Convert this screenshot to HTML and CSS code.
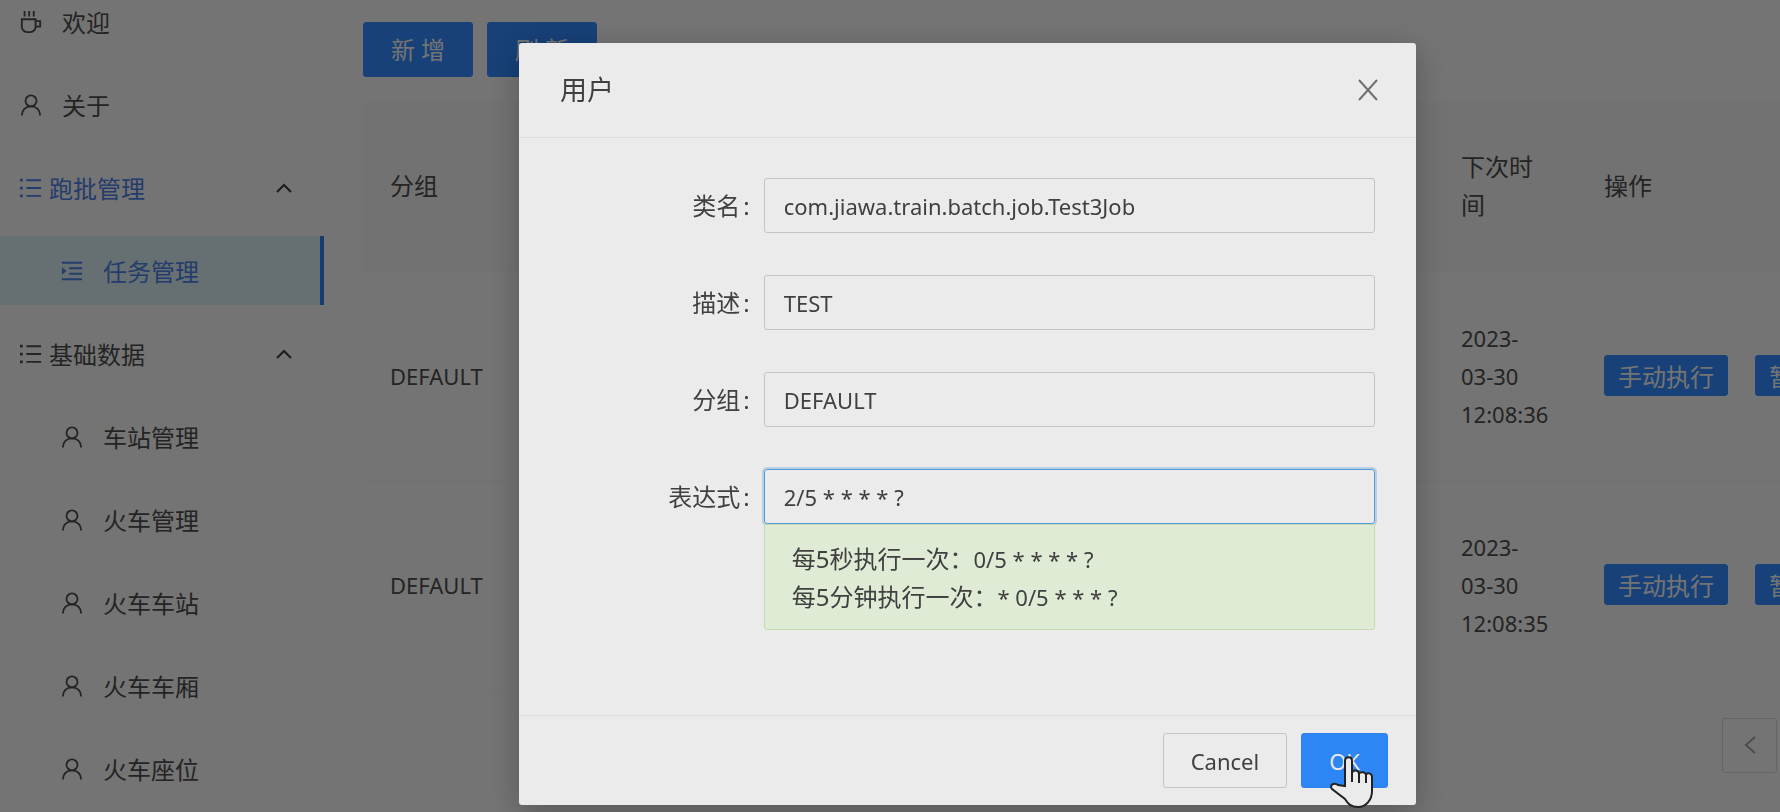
FILE: index.html
```html
<!DOCTYPE html>
<html lang="zh-CN">
<head>
<meta charset="utf-8">
<title>任务管理</title>
<link rel="stylesheet" href="styles.css">
</head>
<body>
<svg class="defs" aria-hidden="true">
  <symbol id="user" viewBox="0 0 24 24"><circle cx="12" cy="7.500" r="6"/><path d="M2 23.500c0-6 4-10 10-10s10 4 10 10"/></symbol>
  <symbol id="list" viewBox="0 0 24 24"><path d="M7 3.500h16M7 12h16M7 20.500h16"/><path class="dot" d="M0 2h3v3H0zM0 10.500h3v3H0zM0 19h3v3H0z"/></symbol>
  <symbol id="indent" viewBox="0 0 24 24"><path d="M1 3h22M9 9h14M9 15h14M1 21h22"/><path class="dot" d="M1 8l5 4-5 4z"/></symbol>
  <symbol id="cup" viewBox="0 0 24 24"><path d="M5 0v6M10 0v6M15 0v6M2 9h15v7a6 6 0 0 1-6 7H8a6 6 0 0 1-6-7zM17 11h5v6h-5"/></symbol>
  <symbol id="up" viewBox="0 0 18 12"><path d="M2 10l7-7 7 7"/></symbol>
</svg>

<div class="page">
  <nav class="sidebar">
    <ul class="menu">
      <li><a class="item" href="#"><svg class="icon"><use href="#cup"/></svg><span>欢迎</span></a></li>
      <li><a class="item" href="#"><svg class="icon"><use href="#user"/></svg><span>关于</span></a></li>
      <li><button class="item group active" type="button"><svg class="icon"><use href="#list"/></svg><span>跑批管理</span><svg class="arrow"><use href="#up"/></svg></button></li>
      <li><a class="item sub selected" href="#"><svg class="icon"><use href="#indent"/></svg><span>任务管理</span></a></li>
      <li><button class="item group" type="button"><svg class="icon"><use href="#list"/></svg><span>基础数据</span><svg class="arrow"><use href="#up"/></svg></button></li>
      <li><a class="item sub" href="#"><svg class="icon"><use href="#user"/></svg><span>车站管理</span></a></li>
      <li><a class="item sub" href="#"><svg class="icon"><use href="#user"/></svg><span>火车管理</span></a></li>
      <li><a class="item sub" href="#"><svg class="icon"><use href="#user"/></svg><span>火车车站</span></a></li>
      <li><a class="item sub" href="#"><svg class="icon"><use href="#user"/></svg><span>火车车厢</span></a></li>
      <li><a class="item sub" href="#"><svg class="icon"><use href="#user"/></svg><span>火车座位</span></a></li>
    </ul>
  </nav>
  <main class="content">
    <div class="toolbar">
      <button class="btn primary wide" type="button">新 增</button>
      <button class="btn primary wide" type="button">刷 新</button>
    </div>
    <table class="table">
      <colgroup><col class="col-group"><col><col class="col-time"><col class="col-actions"></colgroup>
      <thead>
        <tr><th>分组</th><th></th><th>下次时间</th><th>操作</th></tr>
      </thead>
      <tbody>
        <tr><td>DEFAULT</td><td></td><td>2023-<br>03-30<br>12:08:36</td><td><div class="actions"><button class="btn primary small" type="button">手动执行</button><button class="btn primary small" type="button">暂停</button></div></td></tr>
        <tr><td>DEFAULT</td><td></td><td>2023-<br>03-30<br>12:08:35</td><td><div class="actions"><button class="btn primary small" type="button">手动执行</button><button class="btn primary small" type="button">暂停</button></div></td></tr>
      </tbody>
    </table>
    <div class="pagination">
      <button class="prev" type="button" aria-label="上一页"><svg viewBox="0 0 12 18"><path d="M11 1L2 9l9 8"/></svg></button>
    </div>
  </main>
</div>

<div class="mask">
  <section class="modal" role="dialog" aria-labelledby="modal-title">
    <header class="modal-header">
      <h2 id="modal-title">用户</h2>
      <button class="close" type="button" aria-label="关闭"><svg viewBox="0 0 20 22"><path d="M1 1l18 20M19 1L1 21"/></svg></button>
    </header>
    <form class="modal-body">
      <div class="field"><label for="name">类名<i>:</i></label><input id="name" type="text" value="com.jiawa.train.batch.job.Test3Job"></div>
      <div class="field"><label for="desc">描述<i>:</i></label><input id="desc" type="text" value="TEST"></div>
      <div class="field"><label for="group">分组<i>:</i></label><input id="group" type="text" value="DEFAULT"></div>
      <div class="field"><label for="cron">表达式<i>:</i></label>
        <div class="control">
          <input class="focused" id="cron" type="text" value="2/5 * * * * ?">
          <div class="hint"><span>每5秒执行一次：</span>0/5 * * * * ?<br><span>每5分钟执行一次：</span>* 0/5 * * * ?</div>
        </div>
      </div>
    </form>
    <footer class="modal-footer">
      <button class="btn" type="button">Cancel</button>
      <button class="btn primary ok" type="button">OK
        <svg class="pointer" viewBox="0 0 43 53" aria-hidden="true"><path d="M15 30V5c0-5 7-5 7 0v12c1-4 7-3 7 1 1-3 7-2 7 1 1-3 6-2 6 2v14c0 9-6 16-14 16-7 0-10-3-13-8L2 33c-3-4 2-7 6-4z"/><path d="M22 17v9M29 18v9M36 19v8"/></svg>
      </button>
    </footer>
  </section>
</div>
</body>
</html>
```
FILE: styles.css
```css
* { box-sizing: border-box; }

body {
  margin: 0;
  height: 100vh;
  overflow: hidden;
  background: #e8e8e8;
  color: #484848;
  font: 22px/38px "Noto Sans", "Noto Sans CJK SC", sans-serif;
}

button, input { font: inherit; color: inherit; }
button { cursor: pointer; }
svg { fill: none; stroke: currentColor; stroke-width: 2; }
.dot { fill: currentColor; stroke: none; }
.defs { display: none; }

.page { display: flex; height: 100vh; overflow: hidden; }

/* Sidebar */
.sidebar { flex: 0 0 324px; }
.menu {
  display: grid;
  gap: 14px;
  margin: -13px 0 0;
  padding: 0;
  list-style: none;
  font-family: "Noto Sans CJK SC", sans-serif;
  font-size: 24px;
}
.item {
  display: flex;
  align-items: center;
  gap: 20px;
  width: 100%;
  height: 69px;
  padding: 0 31px 0 20px;
  border: 0;
  background: none;
  color: inherit;
  text-align: left;
  text-decoration: none;
}
.group { gap: 7px; }
.sub { padding-left: 61px; }
.icon { width: 22px; height: 22px; }
.arrow { width: 18px; height: 12px; margin-left: auto; color: #383838; }
.active, .selected { color: #4878d8; }
.active .arrow { color: #383838; }
.selected { background: #cce0e6; border-right: 4px solid #2e78e0; }

/* Task table */
.content { flex: 1; min-width: 0; padding: 22px 0 0 39px; overflow: hidden; }
.toolbar { display: flex; gap: 14px; margin-bottom: 25px; }
.btn {
  height: 55px;
  padding: 0 27px;
  border: 1px solid #c4c4c4;
  border-radius: 3px;
  background: transparent;
  white-space: nowrap;
}
.primary { border-color: #2e82f0; background: #2e82f0; color: #e8e8e8; }
.wide { width: 110px; padding: 0; font-size: 24px; }
.small { height: 41px; padding: 0 13px; font: 24px/38px "Noto Sans CJK SC", sans-serif; }
.table { width: 100%; border-collapse: collapse; table-layout: fixed; }
.col-group { width: 156px; }
.col-time { width: 143px; }
.col-actions { width: 203px; }
th, td { padding: 0 27px; border-bottom: 1px solid #e2e2e2; text-align: left; }
th { height: 169px; background: #e5e5e5; font-size: 24px; font-weight: 400; }
td { height: 209px; white-space: nowrap; }
.actions { display: flex; gap: 27px; }
.pagination { display: flex; justify-content: flex-end; padding: 28px 3px 0 0; }
.prev {
  display: grid;
  place-items: center;
  width: 55px;
  height: 55px;
  border: 1px solid #c8c8c8;
  border-radius: 3px;
  background: none;
  color: #989898;
}
.prev svg { width: 12px; height: 18px; }

/* Dialog */
.mask { position: fixed; inset: 0; padding: 43px 0 0 155px; background: rgba(0, 0, 0, .5); }
.modal {
  width: 897px;
  max-width: 100%;
  margin: 0 auto;
  border-radius: 3px;
  background: #ebebeb;
  box-shadow: 0 8px 32px rgba(0, 0, 0, .25);
  color: #404040;
}
.modal-header {
  display: flex;
  align-items: center;
  justify-content: space-between;
  height: 95px;
  padding: 0 38px 0 41px;
  border-bottom: 1px solid #dedede;
}
h2 { margin: 0; font-size: 27px; font-weight: 400; }
.close { display: flex; padding: 0; border: 0; background: none; color: #707070; }
.close svg { width: 20px; height: 22px; }
.modal-body { display: grid; gap: 42px; padding: 40px 41px 85px; }
.field { display: grid; grid-template-columns: 1fr 3fr; align-items: start; }
label { padding-right: 14px; font-size: 24px; line-height: 55px; text-align: right; }
label i { margin-left: 3px; font-style: normal; }
input {
  display: block;
  width: 100%;
  height: 55px;
  padding: 0 19px;
  border: 1px solid #c4c4c4;
  border-radius: 3px;
  background: transparent;
  outline: 0;
}
.focused { border-color: #5599dd; box-shadow: 0 0 0 2px #b8cfe4; }
.hint {
  padding: 15px 27px 13px;
  border: 1px solid #c4dcb0;
  border-radius: 0 0 3px 3px;
  background: #e0ebd6;
}
.hint span { font-size: 24px; }
.modal-footer {
  display: flex;
  justify-content: flex-end;
  gap: 14px;
  padding: 17px 28px;
  border-top: 1px solid #dedede;
}
.ok { position: relative; background: #2e86f5; }
.pointer {
  position: absolute;
  top: 22px;
  left: 28px;
  width: 43px;
  height: 53px;
  fill: #ebebeb;
  stroke: #222222;
}
```
